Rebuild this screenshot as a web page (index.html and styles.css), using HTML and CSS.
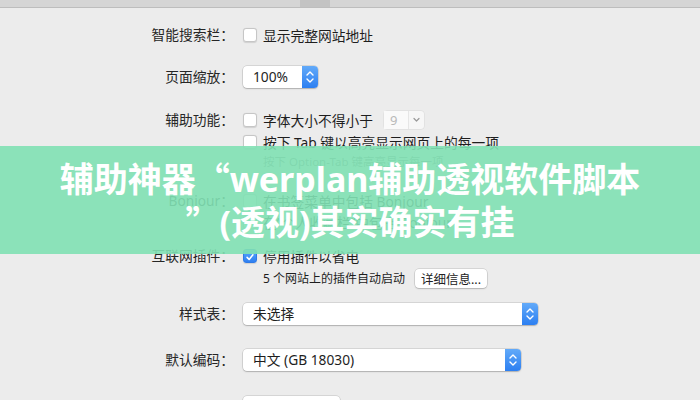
FILE: index.html
```html
<!DOCTYPE html>
<html lang="zh-CN">
<head>
<meta charset="utf-8">
<title>Safari 高级</title>
<link rel="stylesheet" href="styles.css">
</head>
<body>
<div class="tabbar"><div class="tab"></div></div>
<main class="form">
  <div class="row">
    <span class="label">智能搜索栏：</span>
    <div class="ctl">
      <div class="line"><span class="cb"></span>显示完整网站地址</div>
    </div>
  </div>

  <div class="row gap-20">
    <span class="label">页面缩放：</span>
    <div class="ctl">
      <div class="select w-zoom"><span class="val">100%</span><span class="stepper"><svg viewBox="0 0 16 22" width="16" height="22"><path d="M5 9 L8 6 L11 9 M5 13 L8 16 L11 13" fill="none" stroke="#fff" stroke-width="1.4" stroke-linecap="round" stroke-linejoin="round"/></svg></span></div>
    </div>
  </div>

  <div class="row gap-21">
    <span class="label">辅助功能：</span>
    <div class="ctl">
      <div class="line"><span class="cb"></span>字体大小不得小于<span class="combo"><span class="combo-field">9</span><span class="combo-arrow"><svg viewBox="0 0 15 18" width="15" height="18"><path d="M5 7.5 L7.5 10 L10 7.5" fill="none" stroke="#999" stroke-width="1.2" stroke-linecap="round" stroke-linejoin="round"/></svg></span></span></div>
      <div class="line"><span class="cb"></span>按下 Tab 键以高亮显示网页上的每一项</div>
      <div class="hint">按下 Option-Tab 键高亮显示每一项</div>
    </div>
  </div>

  <div class="row gap-18">
    <span class="label">Bonjour：</span>
    <div class="ctl">
      <div class="line short"><span class="cb"></span>在书签菜单中包括 Bonjour</div>
      <div class="line short"><span class="cb"></span>在“个人收藏栏”中包括 Bonjour</div>
    </div>
  </div>

  <div class="row gap-16">
    <span class="label">互联网插件：</span>
    <div class="ctl">
      <div class="line"><span class="cb checked"><svg viewBox="0 0 14 14" width="14" height="14"><path d="M3.6 7.4 L6 9.8 L10.4 4.4" fill="none" stroke="#fff" stroke-width="1.8" stroke-linecap="round" stroke-linejoin="round"/></svg></span>停用插件以省电</div>
      <div class="line sub">5 个网站上的插件自动启动<span class="btn">详细信息...</span></div>
    </div>
  </div>

  <div class="row gap-14">
    <span class="label">样式表：</span>
    <div class="ctl">
      <div class="select w-style"><span class="val">未选择</span><span class="stepper"><svg viewBox="0 0 16 22" width="16" height="22"><path d="M5 9 L8 6 L11 9 M5 13 L8 16 L11 13" fill="none" stroke="#fff" stroke-width="1.4" stroke-linecap="round" stroke-linejoin="round"/></svg></span></div>
    </div>
  </div>

  <div class="row gap-24">
    <span class="label">默认编码：</span>
    <div class="ctl">
      <div class="select w-enc"><span class="val">中文 (GB 18030)</span><span class="stepper"><svg viewBox="0 0 16 22" width="16" height="22"><path d="M5 9 L8 6 L11 9 M5 13 L8 16 L11 13" fill="none" stroke="#fff" stroke-width="1.4" stroke-linecap="round" stroke-linejoin="round"/></svg></span></div>
    </div>
  </div>

  <div class="row gap-25">
    <span class="label"></span>
    <div class="ctl">
      <div class="select w-last"></div>
    </div>
  </div>
</main>
<div class="banner">辅助神器<span class="q">“</span>werplan辅助透视软件脚本<br><span class="q">”</span>(透视)其实确实有挂</div>
</body>
</html>
```

FILE: styles.css
```css
html, body {
  margin: 0;
  padding: 0;
}
body {
  width: 700px;
  height: 400px;
  overflow: hidden;
  background: #ececec;
  font-family: "Noto Sans", "Noto Sans CJK SC", sans-serif;
  color: #222;
  position: relative;
}

.tabbar {
  display: flex;
  height: 7px;
  padding-left: 300px;
  background: #d5d5d5;
  border-bottom: 1px solid #bdbdbd;
}
.tab {
  width: 30px;
  background: #c3c3c3;
}

.form {
  display: flex;
  flex-direction: column;
  padding-top: 16px;
}
.row {
  display: grid;
  grid-template-columns: 234px 1fr;
  column-gap: 9px;
}
.gap-14 { margin-top: 14px; }
.gap-16 { margin-top: 13px; }
.gap-18 { margin-top: 19px; }
.gap-20 { margin-top: 20px; }
.gap-21 { margin-top: 21px; }
.gap-24 { margin-top: 24px; }
.gap-25 { margin-top: 25px; }

.label {
  text-align: right;
  font-size: 13.75px;
  line-height: 22px;
  color: #262626;
  white-space: nowrap;
}
.ctl {
  display: flex;
  flex-direction: column;
  align-items: flex-start;
}
.line {
  display: flex;
  align-items: center;
  height: 22px;
  font-size: 13.75px;
  color: #1e1e1e;
  white-space: nowrap;
}
.line.short {
  height: 21px;
}
.line.sub {
  font-size: 12px;
  padding-left: 20px;
}
.hint {
  height: 18px;
  line-height: 18px;
  padding-left: 20px;
  font-size: 11.5px;
  color: #7a7a7a;
  white-space: nowrap;
}

.cb {
  width: 14px;
  height: 14px;
  box-sizing: border-box;
  margin-right: 6px;
  background: #fff;
  border: 1px solid #c6c6c6;
  border-radius: 3px;
  box-shadow: 0 0.5px 1px rgba(0,0,0,0.12);
  display: inline-flex;
  flex: none;
}
.cb.checked {
  background: linear-gradient(#5aa6fb, #2f80f2);
  border-color: #2f7ae6;
}

.combo {
  display: inline-flex;
  margin-left: 11px;
  height: 18px;
  box-shadow: 0 0 0 0.5px rgba(0,0,0,0.08);
  border-radius: 3px;
  background: #f7f7f7;
}
.combo-field {
  width: 25px;
  box-sizing: border-box;
  padding-left: 6px;
  font-size: 13px;
  line-height: 18px;
  color: #b9b9b9;
  background: #fafafa;
  border-right: 1px solid #e6e6e6;
}
.combo-arrow {
  width: 15px;
  display: flex;
}

.select {
  display: flex;
  height: 22px;
  background: #fff;
  border-radius: 4px;
  box-shadow: 0 0 0 0.5px rgba(0,0,0,0.18), 0 1px 1.5px rgba(0,0,0,0.18);
  font-size: 13.75px;
  color: #1e1e1e;
}
.select .val {
  flex: 1;
  padding-left: 10px;
  line-height: 22px;
  white-space: nowrap;
}
.stepper {
  width: 16px;
  flex: none;
  display: flex;
  background: linear-gradient(#62aaf9, #2c7ff1);
  border-radius: 0 4px 4px 0;
}
.w-zoom { width: 75px; }
.w-style { width: 295px; }
.w-enc { width: 278px; }
.w-last { width: 97px; }

.btn {
  display: inline-flex;
  align-items: center;
  justify-content: center;
  margin-left: 10px;
  width: 72px;
  height: 19px;
  background: #fff;
  border-radius: 4px;
  box-shadow: 0 0 0 0.5px rgba(0,0,0,0.18), 0 1px 1.5px rgba(0,0,0,0.16);
  font-size: 12.5px;
  color: #222;
}

.banner {
  position: absolute;
  left: 0;
  right: 0;
  top: 146px;
  height: 108px;
  box-sizing: border-box;
  padding-top: 11px;
  background: rgba(129, 225, 180, 0.9);
  color: #fff;
  font-family: "Noto Sans", "Noto Sans CJK SC", sans-serif;
  font-weight: 700;
  font-size: 34px;
  line-height: 42px;
  text-align: center;
  white-space: nowrap;
}
.banner .q {
  font-family: "Noto Sans CJK SC", sans-serif;
}
```
